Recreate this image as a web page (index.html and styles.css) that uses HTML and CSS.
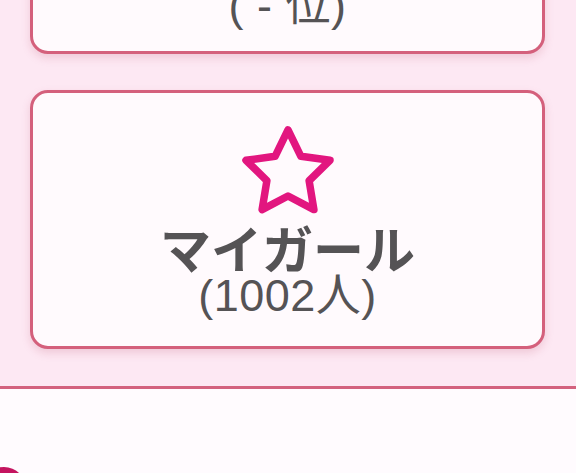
FILE: index.html
```html
<!DOCTYPE html>
<html lang="ja">
<head>
<meta charset="utf-8">
<link rel="stylesheet" href="styles.css">
</head>
<body>
<div class="cards">
  <div class="card card-top">
    <div class="sub">( - 位)</div>
  </div>
  <div class="card card-main">
    <svg class="star" width="100" height="100" viewBox="0 0 100 100">
      <polygon points="50,5.8 62.9,32.3 92,36.3 71.1,56.7 75.9,85.6 50,72 24.1,85.6 28.9,56.7 8,36.3 37.1,32.3" fill="none" stroke="#e2167f" stroke-width="7.5" stroke-linejoin="round"/>
    </svg>
    <div class="title">マイガール</div>
    <div class="sub">(1002人)</div>
  </div>
</div>
<div class="bottom">
  <div class="dot"></div>
</div>
</body>
</html>
```
FILE: styles.css
```css
html, body {
  margin: 0;
  padding: 0;
}
body {
  width: 576px;
  height: 473px;
  overflow: hidden;
  background: #fde8f3;
  font-family: "Liberation Sans", "Noto Sans CJK JP", sans-serif;
  color: #555355;
}
.cards {
  display: flex;
  flex-direction: column;
  gap: 36px;
  padding: 0 31px 37px 30px;
  border-bottom: 3px solid #d3627e;
}
.card {
  background: #fffafd;
  border: 3px solid #d4607c;
  border-radius: 18px;
  box-shadow: 0 4px 8px rgba(190, 90, 120, 0.22);
  display: flex;
  flex-direction: column;
  align-items: center;
}
.card-top {
  height: 120px;
  margin-top: -66px;
  justify-content: flex-end;
  padding-bottom: 24px;
  box-sizing: border-box;
}
.card-main {
  height: 259px;
  box-sizing: border-box;
  padding-top: 31px;
}
.star {
  display: block;
}
.title {
  font-family: "Noto Sans CJK JP", sans-serif;
  font-weight: 700;
  font-size: 51px;
  line-height: 48px;
  margin-top: -1px;
}
.sub {
  font-size: 45px;
  line-height: 42px;
  margin-top: 4px;
  letter-spacing: 0.5px;
}
.bottom {
  background: #fffbfe;
  height: 90px;
  position: relative;
  overflow: hidden;
}
.dot {
  position: absolute;
  left: -18px;
  top: 78px;
  width: 44px;
  height: 44px;
  border-radius: 50%;
  background: #c4145f;
}
```
